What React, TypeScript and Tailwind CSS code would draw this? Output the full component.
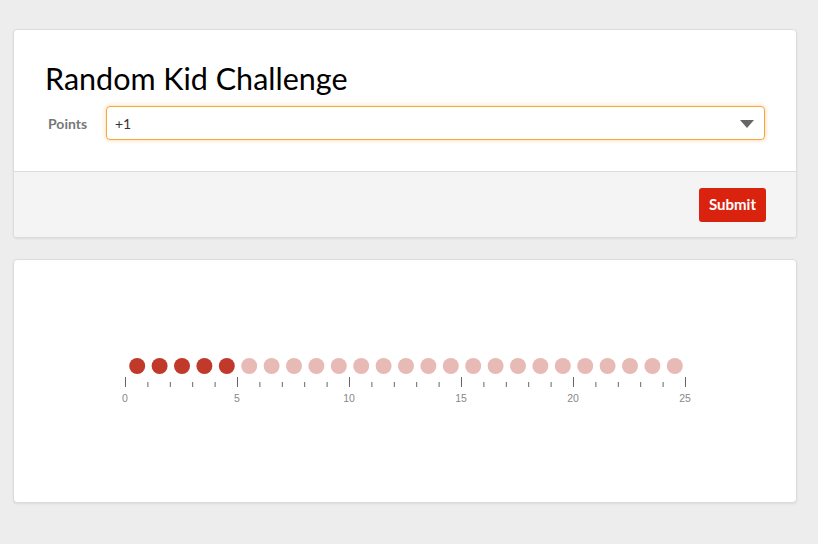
import React from "react";

const font = { fontFamily: "Lato, 'Open Sans', sans-serif" };

function DotChart() {
  const unit = 22.4;
  const x0 = 20;
  const filled = 5;
  const total = 25;
  return (
    <svg width="600" height="242" viewBox="0 0 600 242">
      {Array.from({ length: total }, (_, i) => (
        <circle
          key={i}
          cx={x0 + (i + 0.5) * unit + 1}
          cy={106}
          r={8}
          fill={i < filled ? "#c0392b" : "#e8bab5"}
        />
      ))}
      {Array.from({ length: total + 1 }, (_, i) => {
        const major = i % 5 === 0;
        const x = x0 + i * unit + 0.5;
        return (
          <line
            key={i}
            x1={x}
            x2={x}
            y1={major ? 117 : 122}
            y2={127}
            stroke="#666"
            strokeWidth={1}
          />
        );
      })}
      {[0, 5, 10, 15, 20, 25].map((v) => (
        <text
          key={v}
          x={x0 + v * unit}
          y={142}
          textAnchor="middle"
          fontSize="10.5"
          fill="#888"
          fontFamily="'Liberation Sans', Arial, sans-serif"
        >
          {v}
        </text>
      ))}
    </svg>
  );
}

export default function App() {
  return (
    <div className="min-h-[544px] bg-[#ededed] pt-[29px]" style={font}>
      <div className="ml-[13px] w-[784px] overflow-hidden rounded-[4px] border border-[#dcdcdc] bg-white shadow-[0_1px_2px_rgba(0,0,0,0.08)]">
        <div className="px-[31px] pb-[31px] pt-[28px]">
          <h1 className="text-[30.5px] leading-[40px] text-black">Random Kid Challenge</h1>
          <div className="mt-[8px] flex items-center">
            <label className="w-[61px] pl-[3px] text-[14px] font-bold text-[#777]">Points</label>
            <div className="relative flex h-[34px] flex-1 items-center rounded-[4px] border border-[#f5a742] bg-white pl-[8px] shadow-[0_0_4px_rgba(245,167,66,0.55)]">
              <span className="text-[14px] text-[#333]">+1</span>
              <span className="absolute right-[10px] top-[13px] h-0 w-0 border-x-[7px] border-t-[8px] border-x-transparent border-t-[#666]" />
            </div>
          </div>
        </div>
        <div className="flex h-[66px] items-center justify-end border-t border-[#dcdcdc] bg-[#f4f4f4] pr-[30px]">
          <button className="h-[34px] rounded-[3px] bg-[#d9230f] px-[10px] text-[15px] font-bold text-white">
            Submit
          </button>
        </div>
      </div>
      <div className="ml-[13px] mt-[21px] flex w-[784px] justify-center rounded-[4px] border border-[#dcdcdc] bg-white shadow-[0_1px_2px_rgba(0,0,0,0.08)]">
        <DotChart />
      </div>
    </div>
  );
}
